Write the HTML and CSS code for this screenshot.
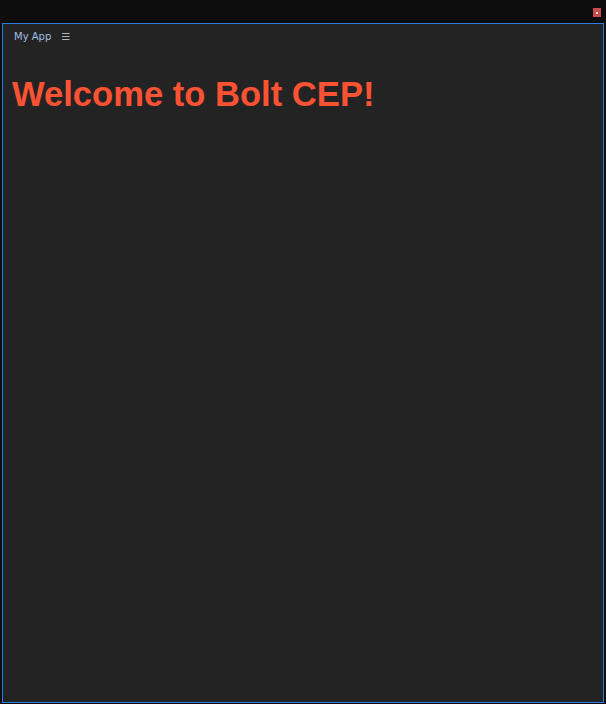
FILE: index.html
```html
<!DOCTYPE html>
<html>
<head>
<meta charset="utf-8">
<link rel="stylesheet" href="styles.css">
</head>
<body>
<div class="titlebar">
  <span class="close"><span class="dot"></span></span>
</div>
<div class="panel">
  <div class="tabs">
    <span class="tab">My App</span>
    <span class="menu">&#9776;</span>
  </div>
  <h1 class="title">Welcome to Bolt CEP!</h1>
</div>
</body>
</html>
```

FILE: styles.css
```css
html, body {
  margin: 0;
  padding: 0;
  background: #0d0d0d;
  width: 606px;
  height: 704px;
  overflow: hidden;
}
.titlebar {
  height: 23px;
  display: flex;
  justify-content: flex-end;
  align-items: flex-start;
  padding-right: 5px;
  box-sizing: border-box;
}
.close {
  margin-top: 8px;
  width: 8px;
  height: 9px;
  background: #c94a4f;
  display: flex;
  align-items: center;
  justify-content: center;
}
.dot {
  width: 2px;
  height: 2px;
  background: #f4e6e6;
}
.panel {
  margin-left: 2px;
  width: 602px;
  height: 680px;
  box-sizing: border-box;
  border: 1px solid #2b7fd8;
  border-left-color: #1a7cf0;
  background: #232323;
  padding: 0 9px;
}
.tabs {
  display: flex;
  align-items: center;
  gap: 10px;
  height: 25px;
  padding-left: 2px;
  font-family: "DejaVu Sans", Verdana, sans-serif;
  font-size: 10px;
  color: #9fc0e0;
}
.menu {
  color: #b8b8b8;
  font-size: 10px;
}
.title {
  margin: 25px 0 0 0;
  font-family: "Liberation Sans", Arial, sans-serif;
  font-weight: bold;
  font-size: 34.6px;
  line-height: 40px;
  color: #fb5233;
}
```
